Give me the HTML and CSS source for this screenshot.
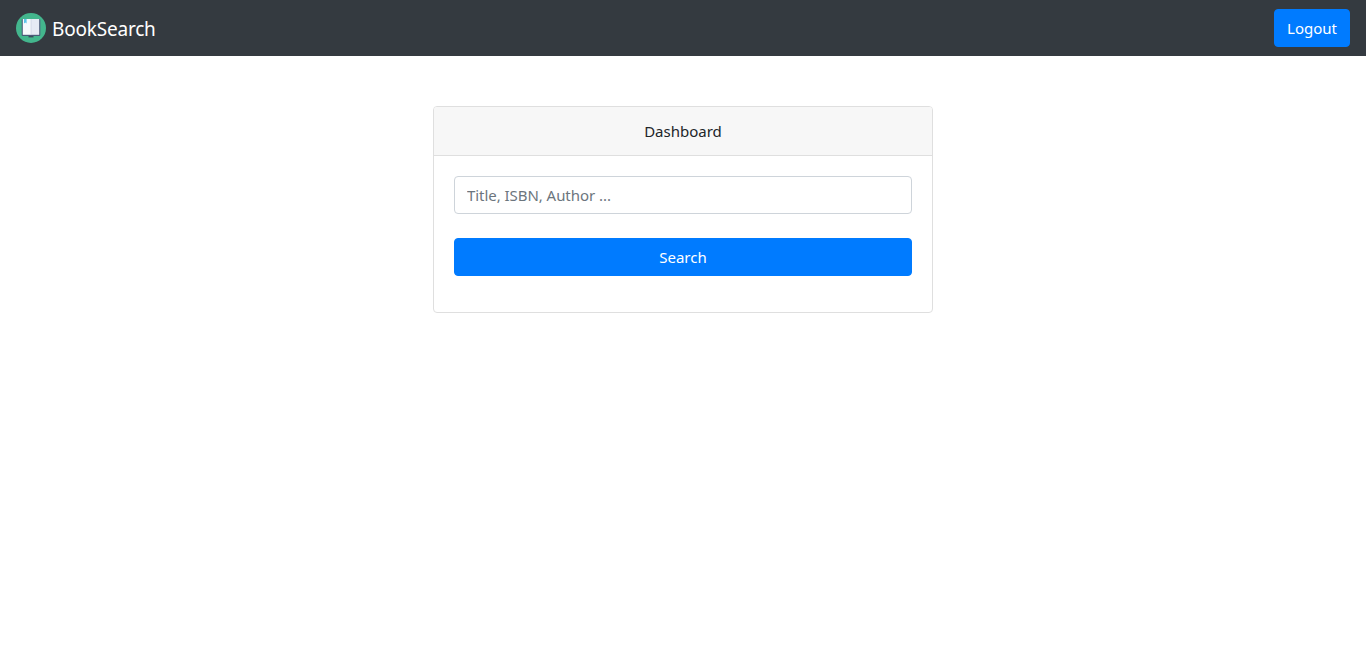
FILE: index.html
```html
<!DOCTYPE html>
<html lang="en">
<head>
<meta charset="utf-8">
<title>BookSearch</title>
<link rel="stylesheet" href="styles.css">
</head>
<body>
<nav class="navbar">
  <a class="brand" href="#">
    <svg class="logo" width="30" height="30" viewBox="0 0 30 30" aria-hidden="true">
      <circle cx="15" cy="15" r="15" fill="#43b68d"/>
      <rect x="12.5" y="22" width="5" height="2.4" fill="#3a4a5c"/>
      <rect x="5.7" y="6" width="18.6" height="17" rx="1" fill="#4a5a78"/>
      <rect x="6.8" y="6" width="8.2" height="15.8" fill="#f7f9fd"/>
      <rect x="15" y="6" width="8.2" height="15.8" fill="#e6eaf4"/>
      <rect x="14.7" y="6" width="0.6" height="15.8" fill="#c4cbdc"/>
      <path d="M8 6h2.6v4.6L9.3 9.4 8 10.6z" fill="#5cc4ea"/>
    </svg>
    <span class="brand-name">BookSearch</span>
  </a>
  <button class="btn btn-logout" type="button">Logout</button>
</nav>
<main class="page">
  <section class="card">
    <header class="card-header">Dashboard</header>
    <div class="card-body">
      <form class="search-form">
        <input class="field" type="text" placeholder="Title, ISBN, Author ...">
        <button class="btn btn-search" type="button">Search</button>
      </form>
    </div>
  </section>
</main>
</body>
</html>
```
FILE: styles.css
```css
* { box-sizing: border-box; }
html, body { margin: 0; padding: 0; }
body {
  background: #fff;
  color: #212529;
  font-family: "Noto Sans", "Open Sans", sans-serif;
  font-size: 15px;
  line-height: 24px;
}
.navbar {
  height: 56px;
  background: #343a40;
  display: flex;
  align-items: center;
  justify-content: space-between;
  padding: 0 16px;
}
.brand {
  display: flex;
  align-items: center;
  gap: 6px;
  color: #fff;
  text-decoration: none;
  font-size: 19px;
  letter-spacing: -0.2px;
}
.brand-name { padding-top: 2px; }
.logo { display: block; }
.btn {
  display: block;
  height: 38px;
  border: 1px solid #007bff;
  border-radius: 4px;
  background: #007bff;
  color: #fff;
  font: inherit;
  padding: 0;
  text-align: center;
}
.btn-logout { width: 76px; }
.btn-search { width: 100%; }
.page {
  display: flex;
  justify-content: center;
  padding-top: 50px;
}
.card {
  width: 500px;
  border: 1px solid #dfdfdf;
  border-radius: 4px;
}
.card-header {
  height: 49px;
  background: #f7f7f7;
  border-bottom: 1px solid #dfdfdf;
  border-radius: 3px 3px 0 0;
  display: flex;
  align-items: center;
  justify-content: center;
}
.card-body { padding: 20px 20px 36px; }
.search-form {
  display: flex;
  flex-direction: column;
  gap: 24px;
}
.field {
  display: block;
  width: 100%;
  height: 38px;
  border: 1px solid #ced4da;
  border-radius: 4px;
  padding: 0 12px;
  font: inherit;
  letter-spacing: -0.05px;
  color: #495057;
  outline: none;
}
.field::placeholder { color: #6c757d; opacity: 1; }
```
